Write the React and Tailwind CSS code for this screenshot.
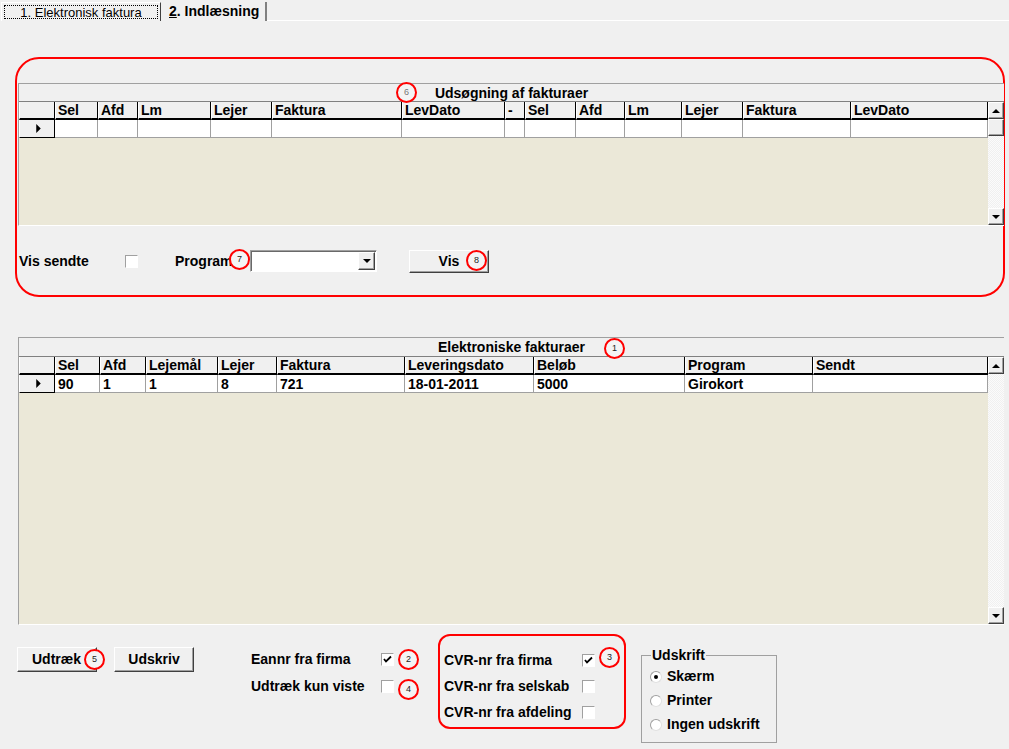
import React from 'react';

const raised = 'border border-t-white border-l-white border-r-[#404040] border-b-[#404040] shadow-[inset_-1px_-1px_0_#a0a0a0]';
const sunken = 'border border-t-[#a0a0a0] border-l-[#a0a0a0] border-r-white border-b-white';

const Tri = ({ dir = 'right', size = 7 }) => (
  <svg width={size} height={size} viewBox="0 0 8 8" className="block">
    {dir === 'right' && <path d="M2 0 L6 4 L2 8 Z" fill="#000" />}
    {dir === 'up' && <path d="M0 6 L4 2 L8 6 Z" fill="#000" />}
    {dir === 'down' && <path d="M0 2 L8 2 L4 6 Z" fill="#000" />}
  </svg>
);

function Badge({ n, left, top, muted }) {
  return (
    <div
      className={`absolute w-[21px] h-[21px] rounded-full border-2 border-[#ff0000] bg-[#f4f4f4] flex items-center justify-center text-[9px] leading-none ${muted ? 'text-[#777]' : 'text-[#222]'}`}
      style={{ left, top }}
    >
      {n}
    </div>
  );
}

function ArrowBtn({ dir }) {
  return (
    <div className={`h-[17px] w-[16px] bg-[#f0f0f0] ${raised} flex items-center justify-center`}>
      <Tri dir={dir} size={8} />
    </div>
  );
}

function Grid({ caption, cols, row, bodyHeight, thumb, tall }) {
  return (
    <div className="w-[986px] flex flex-col border-l border-t border-[#a0a0a0] border-b border-b-white">
      <div className={`${tall ? 'h-[19px] leading-[19px]' : 'h-[18px] leading-[18px]'} bg-[#f0f0f0] border-b border-[#808080] text-center font-bold`}>
        {caption}
      </div>
      <div className="flex" style={{ height: bodyHeight }}>
        <div className="w-[969px] flex flex-col">
          <div className="flex h-[18px]">
            {cols.map((c, i) => (
              <div
                key={i}
                className="h-[18px] bg-[#f0f0f0] border-l border-l-white border-r border-r-black border-b-2 border-b-black pl-[2px] leading-[17px] font-bold whitespace-nowrap overflow-hidden"
                style={{ width: c.w }}
              >
                {c.label}
              </div>
            ))}
          </div>
          <div className="flex h-[18px]">
            {cols.map((c, i) =>
              i === 0 ? (
                <div
                  key={i}
                  className="h-[18px] bg-[#f0f0f0] border-l border-l-white border-r border-r-black border-b border-b-black flex items-center pl-[14px]"
                  style={{ width: c.w }}
                >
                  <Tri dir="right" size={9} />
                </div>
              ) : (
                <div
                  key={i}
                  className="h-[18px] bg-white border-r border-b border-[#a0a0a0] pl-[3px] leading-[18px] font-bold whitespace-nowrap overflow-hidden"
                  style={{ width: c.w }}
                >
                  {row ? row[i - 1] : ''}
                </div>
              )
            )}
          </div>
          <div className="flex-1 bg-[#ebe8d8]" />
        </div>
        <div className="w-[16px] flex flex-col bg-[repeating-conic-gradient(#f0f0f0_0_25%,#fbfbfb_0_50%)] bg-[length:2px_2px]">
          <ArrowBtn dir="up" />
          {thumb && <div className={`h-[17px] w-[16px] bg-[#f0f0f0] ${raised}`} />}
          <div className="flex-1" />
          <ArrowBtn dir="down" />
        </div>
      </div>
    </div>
  );
}

function Check({ checked }) {
  return (
    <div className={`w-[13px] h-[13px] bg-white ${sunken} flex items-center justify-center`}>
      {checked && (
        <svg width="9" height="9" viewBox="0 0 9 9">
          <path d="M1 4 L3 6.5 L8 1.5" stroke="#000" strokeWidth="1.8" fill="none" />
        </svg>
      )}
    </div>
  );
}

function Radio({ on }) {
  return (
    <div className="w-[12px] h-[12px] rounded-full bg-white border border-t-[#a0a0a0] border-l-[#a0a0a0] border-r-[#e0e0e0] border-b-[#e0e0e0] flex items-center justify-center">
      {on && <div className="w-[4px] h-[4px] rounded-full bg-black" />}
    </div>
  );
}

const cols1 = [
  { w: 36, label: '' }, { w: 43, label: 'Sel' }, { w: 40, label: 'Afd' }, { w: 73, label: 'Lm' },
  { w: 61, label: 'Lejer' }, { w: 130, label: 'Faktura' }, { w: 103, label: 'LevDato' },
  { w: 20, label: ' -' }, { w: 51, label: 'Sel' }, { w: 49, label: 'Afd' }, { w: 57, label: 'Lm' },
  { w: 61, label: 'Lejer' }, { w: 108, label: 'Faktura' }, { w: 137, label: 'LevDato' },
];

const cols2 = [
  { w: 36, label: '' }, { w: 45, label: 'Sel' }, { w: 46, label: 'Afd' }, { w: 72, label: 'Lejemål' },
  { w: 59, label: 'Lejer' }, { w: 128, label: 'Faktura' }, { w: 129, label: 'Leveringsdato' },
  { w: 151, label: 'Beløb' }, { w: 128, label: 'Program' }, { w: 175, label: 'Sendt' },
];

export default function App() {
  return (
    <div className="relative w-[1009px] h-[749px] overflow-hidden bg-[#f0f0f0] text-[14px] text-black [font-family:'Liberation_Sans',Arial,sans-serif]">
      {/* Tabs */}
      <div className="flex h-[21px] items-end">
        <div className="ml-[1px] h-[19px] w-[160px] bg-[#f0f0f0] border border-t-white border-l-white border-r-[#404040] border-b-0 p-[2px] text-[13px]">
          <div className="h-full border border-dotted border-black flex items-center justify-center leading-none">
            1. Elektronisk faktura
          </div>
        </div>
        <div className="ml-[2px] h-[19px] w-[104px] border-r-2 border-r-[#808080] flex items-center pl-[6px] font-bold">
          <span className="underline">2</span>. Indlæsning
        </div>
        <div className="flex-1 h-full border-b border-white" />
      </div>

      {/* Udsøgning section */}
      <div className="ml-[15px] mt-[36px] w-[990px] h-[240px] border-2 border-[#ff0000] rounded-[24px] pt-[24px] pl-[1px]">
        <Grid caption="Udsøgning af fakturaer" cols={cols1} bodyHeight={123} thumb />
        <div className="mt-[24px] flex items-center h-[22px]">
          <span className="ml-[1px] w-[106px] font-bold">Vis sendte</span>
          <Check />
          <span className="ml-[37px] w-[75px] font-bold">Program</span>
          <div className={`w-[127px] h-[22px] bg-white ${sunken} shadow-[inset_1px_1px_0_#696969] flex justify-end p-[1px]`}>
            <div className={`w-[17px] h-full bg-[#f0f0f0] ${raised} flex items-center justify-center`}>
              <Tri dir="down" size={8} />
            </div>
          </div>
          <div className={`ml-[32px] w-[80px] h-[23px] bg-[#f0f0f0] ${raised} flex items-center justify-center font-bold`}>
            Vis
          </div>
        </div>
      </div>

      {/* Elektroniske fakturaer */}
      <div className="ml-[18px] mt-[40px]">
        <Grid
          caption="Elektroniske fakturaer"
          cols={cols2}
          row={['90', '1', '1', '8', '721', '18-01-2011', '5000', 'Girokort', '']}
          bodyHeight={267}
          tall
        />
      </div>

      {/* Bottom controls */}
      <div className="flex items-start mt-[9px] pl-[17px]">
        <div className="flex mt-[13px] gap-[17px]">
          <div className={`w-[80px] h-[25px] bg-[#f0f0f0] ${raised} flex items-center pl-[14px] font-bold`}>Udtræk</div>
          <div className={`w-[80px] h-[25px] bg-[#f0f0f0] ${raised} flex items-center justify-center font-bold`}>Udskriv</div>
        </div>
        <div className="ml-[57px] mt-[18px] flex flex-col gap-[12px]">
          <div className="flex items-center h-[15px]">
            <span className="w-[130px] font-bold">Eannr fra firma</span>
            <Check checked />
          </div>
          <div className="flex items-center h-[15px]">
            <span className="w-[130px] font-bold">Udtræk kun viste</span>
            <Check />
          </div>
        </div>
        <div className="ml-[44px] w-[188px] h-[95px] border-2 border-[#ff0000] rounded-[12px] pl-[4px] pt-[17px] flex flex-col gap-[11px]">
          {[['CVR-nr fra firma', true], ['CVR-nr fra selskab', false], ['CVR-nr fra afdeling', false]].map(([l, c]) => (
            <div key={l} className="flex items-center h-[15px]">
              <span className="w-[138px] font-bold whitespace-nowrap">{l}</span>
              <Check checked={c} />
            </div>
          ))}
        </div>
        <fieldset className="ml-[15px] mt-[14px] w-[136px] h-[95px] border border-[#a0a0a0] pl-[8px]">
          <legend className="ml-[1px] px-[1px] font-bold leading-[14px]">Udskrift</legend>
          <div className="flex flex-col gap-[9px] mt-[7px]">
            {[['Skærm', true], ['Printer', false], ['Ingen udskrift', false]].map(([l, on]) => (
              <div key={l} className="flex items-center h-[15px]">
                <Radio on={on} />
                <span className="ml-[5px] font-bold">{l}</span>
              </div>
            ))}
          </div>
        </fieldset>
      </div>

      <Badge n="6" left={396} top={82} muted />
      <Badge n="7" left={229} top={249} />
      <Badge n="8" left={466} top={250} />
      <Badge n="1" left={604} top={338} />
      <Badge n="5" left={84} top={649} />
      <Badge n="2" left={398} top={649} />
      <Badge n="4" left={398} top={679} />
      <Badge n="3" left={599} top={647} />
    </div>
  );
}
